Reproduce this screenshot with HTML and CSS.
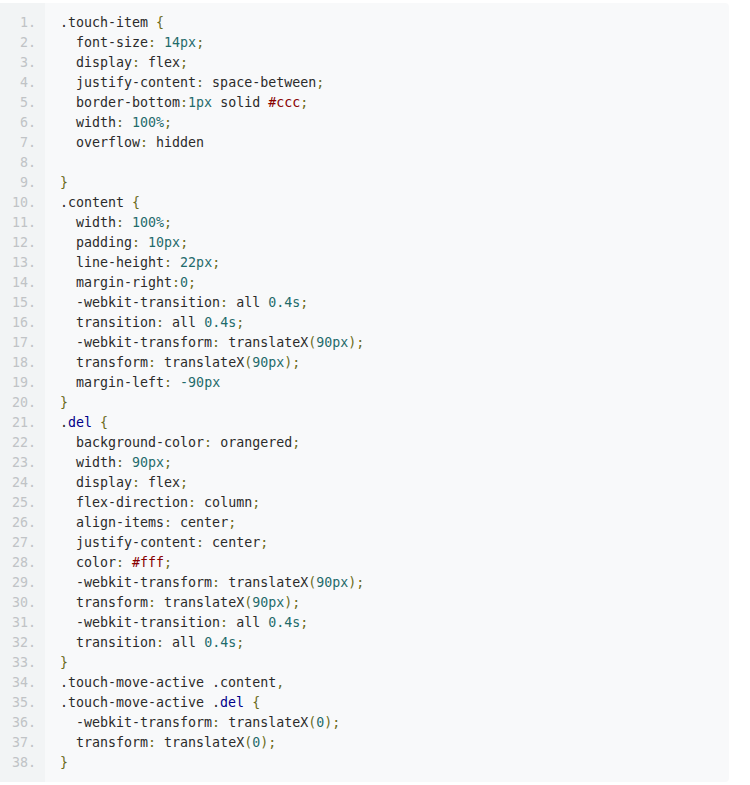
FILE: index.html
```html
<!DOCTYPE html>
<html>
<head>
<meta charset="utf-8">
<link rel="stylesheet" href="styles.css">
</head>
<body>
<div class="code">
<ol class="lines">
<li><span class="p">.touch-item </span><span class="o">{</span></li>
<li>  font-size<span class="o">:</span> <span class="l">14px</span><span class="o">;</span></li>
<li>  display<span class="o">:</span> flex<span class="o">;</span></li>
<li>  justify-content<span class="o">:</span> space-between<span class="o">;</span></li>
<li>  border-bottom<span class="o">:</span><span class="l">1px</span> solid <span class="c">#ccc</span><span class="o">;</span></li>
<li>  width<span class="o">:</span> <span class="l">100%</span><span class="o">;</span></li>
<li>  overflow<span class="o">:</span> hidden</li>
<li> </li>
<li><span class="o">}</span></li>
<li>.content <span class="o">{</span></li>
<li>  width<span class="o">:</span> <span class="l">100%</span><span class="o">;</span></li>
<li>  padding<span class="o">:</span> <span class="l">10px</span><span class="o">;</span></li>
<li>  line-height<span class="o">:</span> <span class="l">22px</span><span class="o">;</span></li>
<li>  margin-right<span class="o">:</span><span class="l">0</span><span class="o">;</span></li>
<li>  -webkit-transition<span class="o">:</span> all <span class="l">0.4s</span><span class="o">;</span></li>
<li>  transition<span class="o">:</span> all <span class="l">0.4s</span><span class="o">;</span></li>
<li>  -webkit-transform<span class="o">:</span> translateX<span class="o">(</span><span class="l">90px</span><span class="o">);</span></li>
<li>  transform<span class="o">:</span> translateX<span class="o">(</span><span class="l">90px</span><span class="o">);</span></li>
<li>  margin-left<span class="o">:</span> <span class="l">-90px</span></li>
<li><span class="o">}</span></li>
<li>.<span class="k">del</span> <span class="o">{</span></li>
<li>  background-color<span class="o">:</span> orangered<span class="o">;</span></li>
<li>  width<span class="o">:</span> <span class="l">90px</span><span class="o">;</span></li>
<li>  display<span class="o">:</span> flex<span class="o">;</span></li>
<li>  flex-direction<span class="o">:</span> column<span class="o">;</span></li>
<li>  align-items<span class="o">:</span> center<span class="o">;</span></li>
<li>  justify-content<span class="o">:</span> center<span class="o">;</span></li>
<li>  color<span class="o">:</span> <span class="c">#fff</span><span class="o">;</span></li>
<li>  -webkit-transform<span class="o">:</span> translateX<span class="o">(</span><span class="l">90px</span><span class="o">);</span></li>
<li>  transform<span class="o">:</span> translateX<span class="o">(</span><span class="l">90px</span><span class="o">);</span></li>
<li>  -webkit-transition<span class="o">:</span> all <span class="l">0.4s</span><span class="o">;</span></li>
<li>  transition<span class="o">:</span> all <span class="l">0.4s</span><span class="o">;</span></li>
<li><span class="o">}</span></li>
<li>.touch-move-active .content<span class="o">,</span></li>
<li>.touch-move-active .<span class="k">del</span> <span class="o">{</span></li>
<li>  -webkit-transform<span class="o">:</span> translateX<span class="o">(</span><span class="l">0</span><span class="o">);</span></li>
<li>  transform<span class="o">:</span> translateX<span class="o">(</span><span class="l">0</span><span class="o">);</span></li>
<li><span class="o">}</span></li>
</ol>
</div>
</body>
</html>
```

FILE: styles.css
```css
html, body {
  margin: 0;
  padding: 0;
  background: #ffffff;
}

.code {
  margin: 3px 21px 0 0;
  width: 729px;
  height: 779px;
  box-sizing: border-box;
  background: linear-gradient(to right, #f2f4f5 0, #f2f4f5 45px, #f8f9fa 45px);
  border-radius: 0 4px 4px 0;
  padding: 10px 0 0 0;
  font-family: "DejaVu Sans Mono", monospace;
  font-size: 13.3px;
  color: #2b2b2b;
}

.lines {
  margin: 0;
  padding: 0;
  list-style: none;
  counter-reset: ln;
}

.lines li {
  counter-increment: ln;
  display: block;
  height: 20px;
  line-height: 20px;
  white-space: pre;
}

.lines li::before {
  content: counter(ln) ".";
  display: inline-block;
  width: 36px;
  text-align: right;
  color: #c0c3c6;
  margin-right: 24px;
}

.o { color: #6b6b1a; }
.l { color: #1f6b6b; }
.k { color: #000088; }
.c { color: #880000; }
```
